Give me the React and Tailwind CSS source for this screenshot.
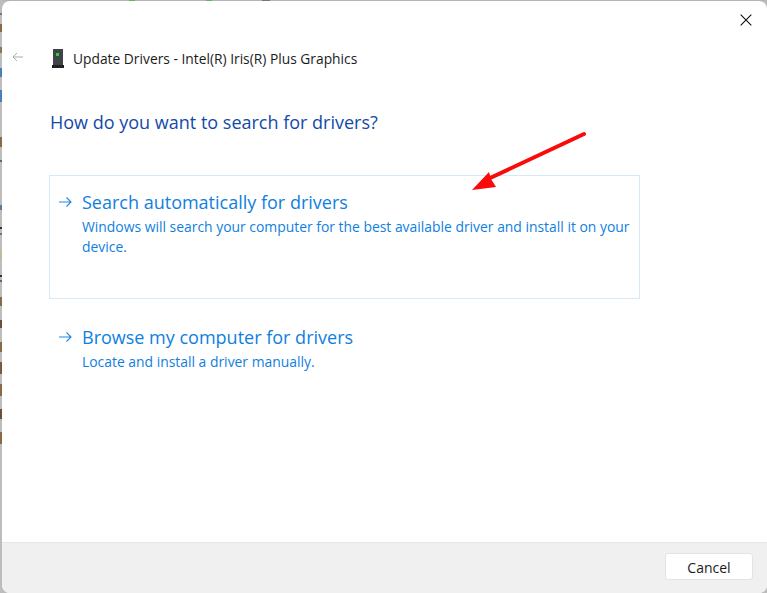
import React from 'react';

// ticks of the desktop that shows through at the window's left edge
const edgeTicks = [
  { h: 13, c: '#bdbdbd' }, { h: 2, c: '#777777' }, { h: 9, c: '#bdbdbd' }, { h: 8, c: '#8a6a45' },
  { h: 15, c: '#bdbdbd' }, { h: 6, c: '#8a7a5a' }, { h: 15, c: '#bdbdbd' }, { h: 9, c: '#4a7fb5' },
  { h: 13, c: '#bdbdbd' }, { h: 12, c: '#4a7fb5' }, { h: 35, c: '#bdbdbd' }, { h: 10, c: '#8a6a45' },
  { h: 13, c: '#bdbdbd' }, { h: 2, c: '#666666' }, { h: 43, c: '#bdbdbd' }, { h: 5, c: '#5a7a9a' },
  { h: 17, c: '#bdbdbd' }, { h: 2, c: '#333333' }, { h: 4, c: '#bdbdbd' }, { h: 2, c: '#667777' },
  { h: 15, c: '#bdbdbd' }, { h: 10, c: '#c4b8a4' }, { h: 15, c: '#bdbdbd' }, { h: 2, c: '#333333' },
  { h: 3, c: '#bdbdbd' }, { h: 2, c: '#666666' }, { h: 15, c: '#bdbdbd' }, { h: 9, c: '#8a6a45' },
  { h: 14, c: '#bdbdbd' }, { h: 8, c: '#6a4f3a' }, { h: 14, c: '#bdbdbd' }, { h: 10, c: '#8a6a45' },
  { h: 10, c: '#bdbdbd' }, { h: 12, c: '#7a5a3a' }, { h: 10, c: '#bdbdbd' }, { h: 12, c: '#8a6a45' },
  { h: 13, c: '#bdbdbd' }, { h: 10, c: '#6a4f3a' }, { h: 13, c: '#bdbdbd' }, { h: 12, c: '#8a6a45' },
];

const OptionArrow = () => (
  <svg width="14" height="12" viewBox="0 0 14 12" fill="none" stroke="#1e88e5" strokeWidth="1.1" className="shrink-0">
    <path d="M1 6h12M8.5 1.5 13 6l-4.5 4.5" />
  </svg>
);

function Option({ title, text, boxed }) {
  return (
    <div className={`w-[591px] border pl-[8px] flex gap-[10px] ${boxed ? 'h-[124px] border-[#d6e9f8] pt-[13px]' : 'h-[84px] border-transparent pt-[24px]'}`}>
      <div className="pt-[7px]"><OptionArrow /></div>
      <div className="text-[#0f80e0]">
        <div className="text-[18px] leading-[26px]">{title}</div>
        <div className="text-[13.9px] leading-[20px] mt-[2px]">{text}</div>
      </div>
    </div>
  );
}

export default function App() {
  return (
    <div className="relative w-[767px] h-[593px] flex bg-[#bdbdbd] font-['Open_Sans','Noto_Sans',sans-serif] overflow-hidden">
      <div className="w-[2px] flex flex-col shrink-0">
        {edgeTicks.map((t, i) => (
          <div key={i} className="shrink-0" style={{ height: t.h, background: t.c }} />
        ))}
      </div>

      <div className="flex-1 flex flex-col min-w-0">
        {/* bit of the desktop above the window */}
        <div className="h-px shrink-0 flex bg-[#b4b4b4]">
          <div className="w-[127px]" />
          <div className="w-[6px] bg-[#5cb85c]" />
          <div className="w-[71px]" />
          <div className="w-[6px] bg-[#5cb85c]" />
          <div className="w-[50px]" />
          <div className="w-[8px] bg-[#777777]" />
        </div>

        <div className="flex-1 flex flex-col bg-white rounded-[8px] overflow-hidden">
          {/* title row */}
          <div className="h-[40px] mt-[37px] relative shrink-0 flex items-center">
            <svg width="12" height="10" viewBox="0 0 12 10" fill="none" stroke="#ababab" strokeWidth="1" className="ml-[10px] mb-[2px]">
              <path d="M11 5H1M5 1 1 5l4 4" />
            </svg>
            <svg width="12" height="19" viewBox="0 0 12 19" className="ml-[28px]">
              <rect x="1" y="0" width="10" height="16" fill="#3f4448" />
              <rect x="0" y="16" width="12" height="3" fill="#1f2224" />
              <rect x="4" y="4" width="3" height="3" fill="#22d33c" />
            </svg>
            <span className="ml-[9px] pt-[2px] text-[13.8px] text-[#1b1b1b]">Update Drivers - Intel(R) Iris(R) Plus Graphics</span>
            <svg width="12" height="12" viewBox="0 0 12 12" fill="none" stroke="#111111" strokeWidth="1.1" className="absolute right-[15px] -top-[24px]">
              <path d="M.7.7l10.6 10.6M11.3.7.7 11.3" />
            </svg>
          </div>

          <div className="flex-1 pl-[47px]">
            <h1 className="text-[18px] leading-[26px] mt-[31px] pl-px text-[#134aa8]">How do you want to search for drivers?</h1>
            <div className="mt-[40px]">
              <Option boxed title="Search automatically for drivers" text={<>Windows will search your computer for the best available driver and install it on your device.</>} />
              <Option title="Browse my computer for drivers" text="Locate and install a driver manually." />
            </div>
          </div>

          {/* footer */}
          <div className="h-[51px] shrink-0 bg-[#f0f0f0] border-t border-[#e6e6e6] flex justify-end items-start pt-[10px] pr-[14px]">
            <button className="w-[88px] h-[27px] pt-[2px] bg-white border border-[#e3e3e3] rounded-[3px] text-[14px] text-[#1b1b1b]">Cancel</button>
          </div>
        </div>
      </div>

      {/* red annotation arrow over the dialog */}
      <svg width="120" height="65" viewBox="0 0 120 65" className="absolute left-[470px] top-[130px]">
        <path d="M114 4 18 49" stroke="#fb0a0a" strokeWidth="4" strokeLinecap="round" />
        <path d="M2 60 19 42 21 49 26 57Z" fill="#fb0a0a" />
      </svg>
    </div>
  );
}
